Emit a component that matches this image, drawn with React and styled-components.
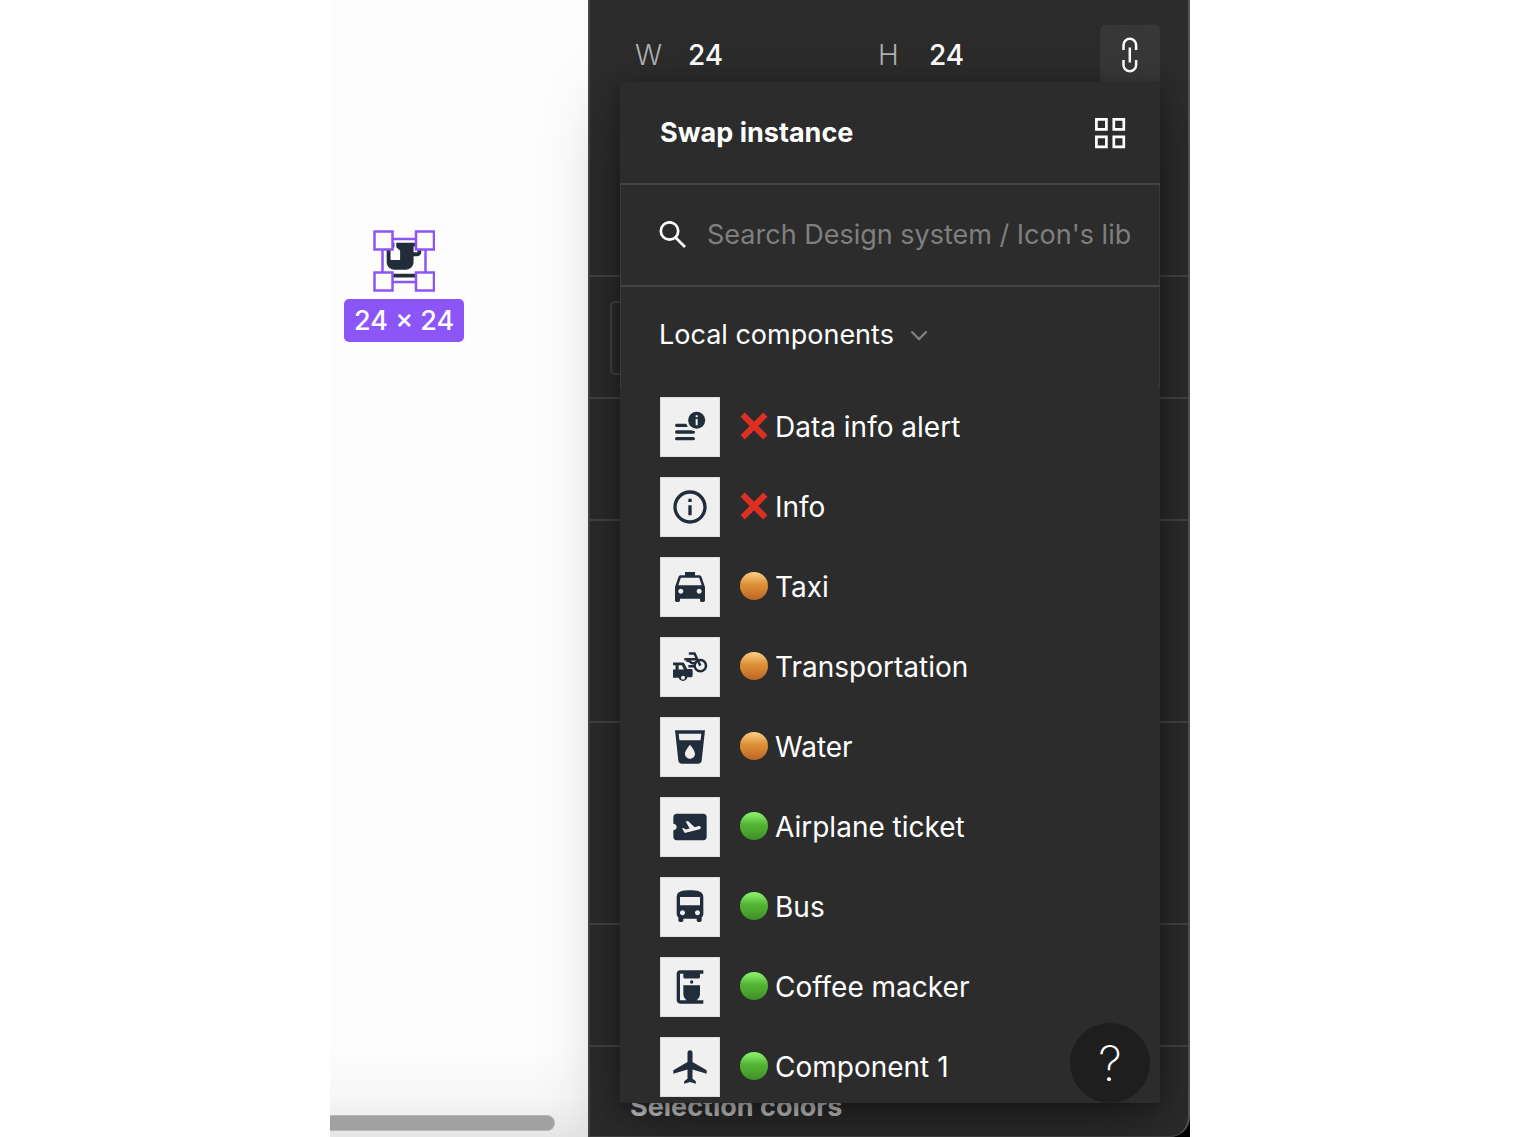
import React from "react";
import styled, { createGlobalStyle } from "styled-components";

const color = {
  panel: "#2c2c2c",
  line: "#444444",
  ink: "#212d3b",
  tile: "#f0f0f0",
  accent: "#8c55f7",
};

const GlobalStyle = createGlobalStyle`
  *, *::before, *::after { box-sizing: border-box; }
  body {
    margin: 0;
    background: #ffffff;
    font-family: Inter, "Liberation Sans", sans-serif;
    font-size: 28px;
    line-height: 40px;
    color: #ffffff;
    overflow: hidden;
  }
  button, input, select {
    font: inherit;
    color: inherit;
    background: none;
    border: 0;
    padding: 0;
    margin: 0;
    outline: 0;
  }
  button, select { cursor: pointer; }
  svg { display: block; flex: none; }
`;

const Page = styled.div`
  display: flex;
  justify-content: center;
  height: 100vh;
  padding-left: 2px;
`;

const Editor = styled.main`
  position: relative;
  display: flex;
  width: 100%;
  max-width: 860px;
  overflow: hidden;
  background: #000000;
`;

const Canvas = styled.section`
  position: relative;
  flex: 1;
  background: linear-gradient(to top, #e6e6e6, #f7f7f7 40px, #fdfdfd 90px);
`;

const Selection = styled.div`
  position: absolute;
  left: 14px;
  top: 230px;
  display: flex;
  flex-direction: column;
  align-items: center;
  gap: 7px;
`;

const SizeBadge = styled.div`
  padding: 2px 10px 1px;
  border-radius: 5px;
  background: ${color.accent};
  font-size: 27px;
  font-weight: 500;
  white-space: nowrap;
`;

const ScrollThumb = styled.div`
  position: absolute;
  left: 0;
  right: 33px;
  bottom: 6px;
  height: 16px;
  border: 1px solid #b8b8b8;
  border-left: 0;
  border-radius: 0 8px 8px 0;
  background: #a1a1a1;
`;

const Panel = styled.aside`
  display: flex;
  flex-direction: column;
  width: 602px;
  border: 2px solid ${color.line};
  border-top: 0;
  border-right-color: #555555;
  border-bottom-width: 1px;
  border-bottom-right-radius: 20px;
  background: ${color.panel};
`;

const PanelSection = styled.section`
  flex: ${(p) => (p.$height ? "none" : "1")};
  height: ${(p) => (p.$height ? `${p.$height}px` : "auto")};
  padding: 24px 28px 0 20px;
  border-top: ${(p) => (p.$first ? "0" : `2px solid ${color.line}`)};
`;

const SizeRow = styled.div`
  display: grid;
  grid-template-columns: 243px 1fr 60px;
  padding: 1px 0 0 25px;
`;

const SizeField = styled.label`
  display: flex;
  align-items: center;
  height: 60px;
  color: #b3b3b3;
`;

const FieldName = styled.span`
  width: ${(p) => p.$width}px;
  font-weight: 300;
`;

const SizeInput = styled.input`
  width: 80px;
  color: #ffffff;
  font-weight: 500;
`;

const LinkButton = styled.button`
  display: grid;
  place-items: center;
  width: 60px;
  height: 60px;
  border-radius: 5px;
  background: #383838;
`;

const FieldBox = styled.div`
  height: 74px;
  border: 2px solid ${color.line};
  border-radius: 5px;
`;

const SectionTitle = styled.h2`
  margin: 16px 0 0 20px;
  font-size: 27px;
  line-height: 40px;
  font-weight: 700;
  color: #d0d0d0;
`;

const Popover = styled.section`
  position: absolute;
  right: 30px;
  top: 82px;
  bottom: 34px;
  width: 540px;
  overflow: hidden;
  border-radius: 3px 3px 0 0;
  background: ${color.panel};
  box-shadow: 0 25px 75px rgba(0, 0, 0, 0.35), 0 5px 18px rgba(0, 0, 0, 0.3);
`;

const PopoverHeader = styled.header`
  display: flex;
  align-items: center;
  justify-content: space-between;
  height: 103px;
  padding: 0 34px 0 40px;
  border-bottom: 2px solid ${color.line};
`;

const PopoverTitle = styled.h1`
  margin: 0;
  font-size: 27px;
  line-height: 40px;
  font-weight: 700;
`;

const SearchBar = styled.label`
  display: flex;
  align-items: center;
  gap: 20px;
  height: 102px;
  padding: 0 29px 0 38px;
  border: 1px solid #3a3a3a;
  border-width: 0 1px;
  border-bottom: 2px solid ${color.line};
`;

const SearchInput = styled.input`
  flex: 1;
  min-width: 0;
  font-size: 27px;
  &::placeholder { color: #7f7f7f; opacity: 1; }
`;

const LibraryPicker = styled.label`
  display: flex;
  align-items: center;
  gap: 16px;
  height: 100px;
  padding: 0 38px 4px;
  border: 1px solid #3a3a3a;
  border-width: 0 1px;
`;

const LibrarySelect = styled.select`
  appearance: none;
  font-size: 27px;
`;

const ComponentList = styled.ul`
  margin: 0;
  padding: 0;
  list-style: none;
`;

const ComponentRow = styled.button`
  display: flex;
  align-items: center;
  width: 100%;
  height: 80px;
  padding: 0 40px;
  text-align: left;
`;

const Tile = styled.span`
  display: grid;
  place-items: center;
  width: 60px;
  height: 60px;
  margin-right: 20px;
  border: 1px solid #dcdede;
  background: ${color.tile};
  color: ${color.ink};
`;

const Mark = styled.span`
  display: block;
  width: 28px;
  height: 28px;
  margin: 0 7px 2px 0;
`;

const Dot = styled(Mark)`
  border-radius: 50%;
  background: ${(p) =>
    p.$tone === "green"
      ? "linear-gradient(#8df06c, #7be25a 15%, #52b433 45%, #4ba52e 70%, #3f8f27)"
      : "linear-gradient(#f8cd8a, #f2bb6b 15%, #dc8f38 45%, #d07d2e 70%, #bb6425)"};
`;

const HelpButton = styled.button`
  position: absolute;
  right: 40px;
  bottom: 34px;
  width: 80px;
  height: 80px;
  padding: 2px 0 0;
  border-radius: 50%;
  background: #1e1e1e;
  font-size: 48px;
  font-weight: 200;
`;

const SelectedCup = () => (
  <svg width="62" height="62" viewBox="0 0 62 62" aria-label="Selected icon">
    <g transform="translate(6 7) scale(1.92)" fill={color.ink}>
      <path d="M2 19.2h18v1.9H2zM20 3H9v2.4l1.81 1.45c.12.09.19.24.19.39v4.26c0 .28-.22.5-.5.5h-4c-.28 0-.5-.22-.5-.5V7.24c0-.15.07-.3.19-.39L8 5.4V3H4v10c0 2.21 1.79 4 4 4h6c2.21 0 4-1.79 4-4v-3h2c1.11 0 2-.89 2-2V5c0-1.11-.89-2-2-2zm0 5h-2V5h2v3z" />
    </g>
    <g fill="none" stroke={color.accent} strokeWidth="2.5">
      <path d="M9.500 9h43v43h-43z" />
      <g fill="#fdfdfd">
        <path d="M1.500 1.500h18v18h-18zM43 1.500h18v18H43zM1.500 42.500h18v18h-18zM43 42.500h18v18H43z" />
      </g>
    </g>
  </svg>
);

const LinkIcon = () => (
  <svg width="18" height="36" viewBox="0 0 18 36" fill="none" stroke="#fff" strokeWidth="2.500">
    <path d="M2.500 13V8a6.300 6.300 0 0 1 12.600 0v5M2.500 23v5a6.300 6.300 0 0 0 12.600 0v-5M8.800 10.500v15" />
  </svg>
);

const GridIcon = () => (
  <svg width="32" height="32" viewBox="0 0 32 32" fill="none" stroke="#fff" strokeWidth="2.700">
    <path d="M2.400 2.400h10v10h-10zM19.800 2.400h10v10h-10zM2.400 19.800h10v10h-10zM19.800 19.800h10v10h-10z" />
  </svg>
);

const SearchIcon = () => (
  <svg width="28" height="28" viewBox="0 0 28 28" fill="none" stroke="#fff" strokeWidth="2.700">
    <circle cx="10.500" cy="10" r="8.700" />
    <path d="M16.500 16.500l9.500 9.500" />
  </svg>
);

const Chevron = () => (
  <svg width="18" height="12" viewBox="0 0 18 12" fill="none" stroke="#808080" strokeWidth="2.300">
    <path d="M1.500 2.500L9 10l7.500-7.500" />
  </svg>
);

const Cross = () => (
  <Mark>
    <svg width="28" height="28" viewBox="0 0 28 28">
      <path d="M.5 4.800L4.800.5 14 9.700 23.200.5 27.500 4.800 18.300 14 27.500 23.200 23.200 27.500 14 18.300 4.800 27.500.5 23.200 9.700 14z" fill="#df2f22" />
    </svg>
  </Mark>
);

const glyphs = {
  data: (
    <>
      <path d="M4 10h7v2H4a1 1 0 0 1 0-2zM4 14h10a1 1 0 0 1 0 2H4a1 1 0 0 1 0-2zM4 18h10a1 1 0 0 1 0 2H4a1 1 0 0 1 0-2z" />
      <circle cx="16" cy="8" r="6.600" fill={color.tile} />
      <circle cx="16" cy="8" r="5.100" />
      <path d="M15.400 5h1.200v1.200h-1.200zM15.400 7.200h1.200V11h-1.200z" fill={color.tile} />
    </>
  ),
  info: (
    <path d="M11 7h2v2h-2zm0 4h2v6h-2zm1-9C6.480 2 2 6.480 2 12s4.480 10 10 10 10-4.480 10-10S17.520 2 12 2zm0 18c-4.410 0-8-3.590-8-8s3.590-8 8-8 8 3.590 8 8-3.590 8-8 8z" />
  ),
  taxi: (
    <path d="M18.920 6.010C18.720 5.420 18.160 5 17.500 5H15V3H9v2H6.500c-.66 0-1.210.42-1.420 1.010L3 12v8c0 .55.45 1 1 1h1c.55 0 1-.45 1-1v-1h12v1c0 .55.45 1 1 1h1c.55 0 1-.45 1-1v-8l-2.080-5.990zM6.500 16c-.83 0-1.500-.67-1.500-1.500S5.670 13 6.500 13s1.500.67 1.500 1.500S7.330 16 6.500 16zm11 0c-.83 0-1.500-.67-1.500-1.500s.67-1.500 1.500-1.500 1.500.67 1.500 1.500-.67 1.500-1.500 1.500zM5 11l1.500-4.500h11L19 11H5z" />
  ),
  transport: (
    <>
      <path fillRule="evenodd" d="M1.800 9.300h5.700c.5 0 .9.200 1.100.6l1.700 3.300h2.300c.6 0 1 .4 1 1v2.700c0 .8-.5 1.300-1.200 1.300h-2a2.700 2.700 0 0 1-5.200.300H1.800zM1.800 11v2.500h1.500V11zM5.200 11v2.500h3.100L7.100 11zM7.800 17.300a1.200 1.200 0 1 0 0 2.400 1.200 1.200 0 0 0 0-2.400z" />
      <g fill="none" stroke="currentColor" strokeWidth="1.500">
        <circle cx="18.200" cy="11.200" r="3.400" />
        <path d="M11.300 3.900h3.400l2 4.200 1.500 3.100M8.600 7.300h8M9.800 8.300h1.500l2 1.400h2.200M11 11.600h3.800" />
      </g>
    </>
  ),
  water: (
    <path d="M3 2l2.010 18.230C5.130 21.230 5.970 22 7 22h10c1.030 0 1.870-.77 1.990-1.770L21 2H3zm9 17c-1.660 0-3-1.340-3-3 0-2 3-5.400 3-5.400s3 3.400 3 5.400c0 1.660-1.340 3-3 3zm6.330-11H5.670l-.44-4h13.550l-.45 4z" />
  ),
  ticket: (
    <path d="M20.190 4H4c-1.100 0-1.990.9-1.990 2v4c1.100 0 1.990.9 1.990 2s-.89 2-2 2v4c0 1.100.9 2 2 2h16.190c.99 0 1.810-.9 1.810-2V6c0-1.100-.82-2-1.810-2zm-2.460 9.300-8.860 2.360-1.660-2.880.93-.25 1.260.99 2.390-.64-2.400-4.160 1.400-.38 4.010 3.740 2.440-.65c.51-.14 1.040.17 1.180.68.13.51-.17 1.040-.69 1.190z" />
  ),
  bus: (
    <path d="M4 16c0 .88.39 1.670 1 2.220V20c0 .55.45 1 1 1h1c.55 0 1-.45 1-1v-1h8v1c0 .55.45 1 1 1h1c.55 0 1-.45 1-1v-1.780c.61-.55 1-1.340 1-2.220V6c0-3.500-3.580-4-8-4s-8 .5-8 4v10zm3.500 1c-.83 0-1.500-.67-1.500-1.500S6.670 14 7.500 14s1.500.67 1.500 1.500S8.330 17 7.500 17zm9 0c-.83 0-1.500-.67-1.500-1.500s.67-1.500 1.500-1.500 1.500.67 1.500 1.500-.67 1.500-1.500 1.500zm1.500-6H6V6h12v5z" />
  ),
  coffee: (
    <>
      <path d="M6 2h14v2h-2v2c0 .5-.4.900-.9.900H8.900C8.400 6.900 8 6.500 8 6V4H6v16h4c-1.200-.9-2-2.400-2-4v-5h10v5c0 1.600-.8 3.100-2 4h4v2H6c-1.100 0-2-.9-2-2V4c0-1.100.9-2 2-2z" />
      <circle cx="13" cy="9" r="1" />
    </>
  ),
  plane: (
    <path d="M10.500 9V3.500a1.500 1.500 0 0 1 3 0V9l8.500 5v2l-8.500-2.500V19l2 1.500V22L12 21l-3.500 1v-1.500l2-1.500v-5.500L2 16v-2z" />
  ),
};

const components = [
  { glyph: "data", mark: "cross", name: "Data info alert" },
  { glyph: "info", mark: "cross", name: "Info" },
  { glyph: "taxi", mark: "orange", name: "Taxi" },
  { glyph: "transport", mark: "orange", name: "Transportation" },
  { glyph: "water", mark: "orange", name: "Water" },
  { glyph: "ticket", mark: "green", name: "Airplane ticket" },
  { glyph: "bus", mark: "green", name: "Bus" },
  { glyph: "coffee", mark: "green", name: "Coffee macker" },
  { glyph: "plane", mark: "green", name: "Component 1" },
];

export default function App() {
  return (
    <Page>
      <GlobalStyle />
      <Editor>
        <Canvas>
          <Selection>
            <SelectedCup />
            <SizeBadge>24 × 24</SizeBadge>
          </Selection>
          <ScrollThumb />
        </Canvas>
        <Panel>
          <PanelSection $height={275} $first>
            <SizeRow>
              <SizeField>
                <FieldName $width={53}>W</FieldName>
                <SizeInput defaultValue="24" />
              </SizeField>
              <SizeField>
                <FieldName $width={51}>H</FieldName>
                <SizeInput defaultValue="24" />
              </SizeField>
              <LinkButton aria-label="Constrain proportions">
                <LinkIcon />
              </LinkButton>
            </SizeRow>
          </PanelSection>
          <PanelSection $height={122}>
            <FieldBox />
          </PanelSection>
          <PanelSection $height={122} />
          <PanelSection $height={202} />
          <PanelSection $height={202} />
          <PanelSection $height={122} />
          <PanelSection>
            <SectionTitle>Selection colors</SectionTitle>
          </PanelSection>
        </Panel>
        <Popover>
          <PopoverHeader>
            <PopoverTitle>Swap instance</PopoverTitle>
            <button aria-label="Show as grid">
              <GridIcon />
            </button>
          </PopoverHeader>
          <SearchBar>
            <SearchIcon />
            <SearchInput placeholder="Search Design system / Icon's library" />
          </SearchBar>
          <LibraryPicker>
            <LibrarySelect aria-label="Library">
              <option>Local components</option>
            </LibrarySelect>
            <Chevron />
          </LibraryPicker>
          <ComponentList>
            {components.map((item) => (
              <li key={item.name}>
                <ComponentRow>
                  <Tile>
                    <svg width="40" height="40" viewBox="0 0 24 24" fill="currentColor">
                      {glyphs[item.glyph]}
                    </svg>
                  </Tile>
                  {item.mark === "cross" ? <Cross /> : <Dot $tone={item.mark} />}
                  {item.name}
                </ComponentRow>
              </li>
            ))}
          </ComponentList>
        </Popover>
        <HelpButton aria-label="Help">?</HelpButton>
      </Editor>
    </Page>
  );
}
